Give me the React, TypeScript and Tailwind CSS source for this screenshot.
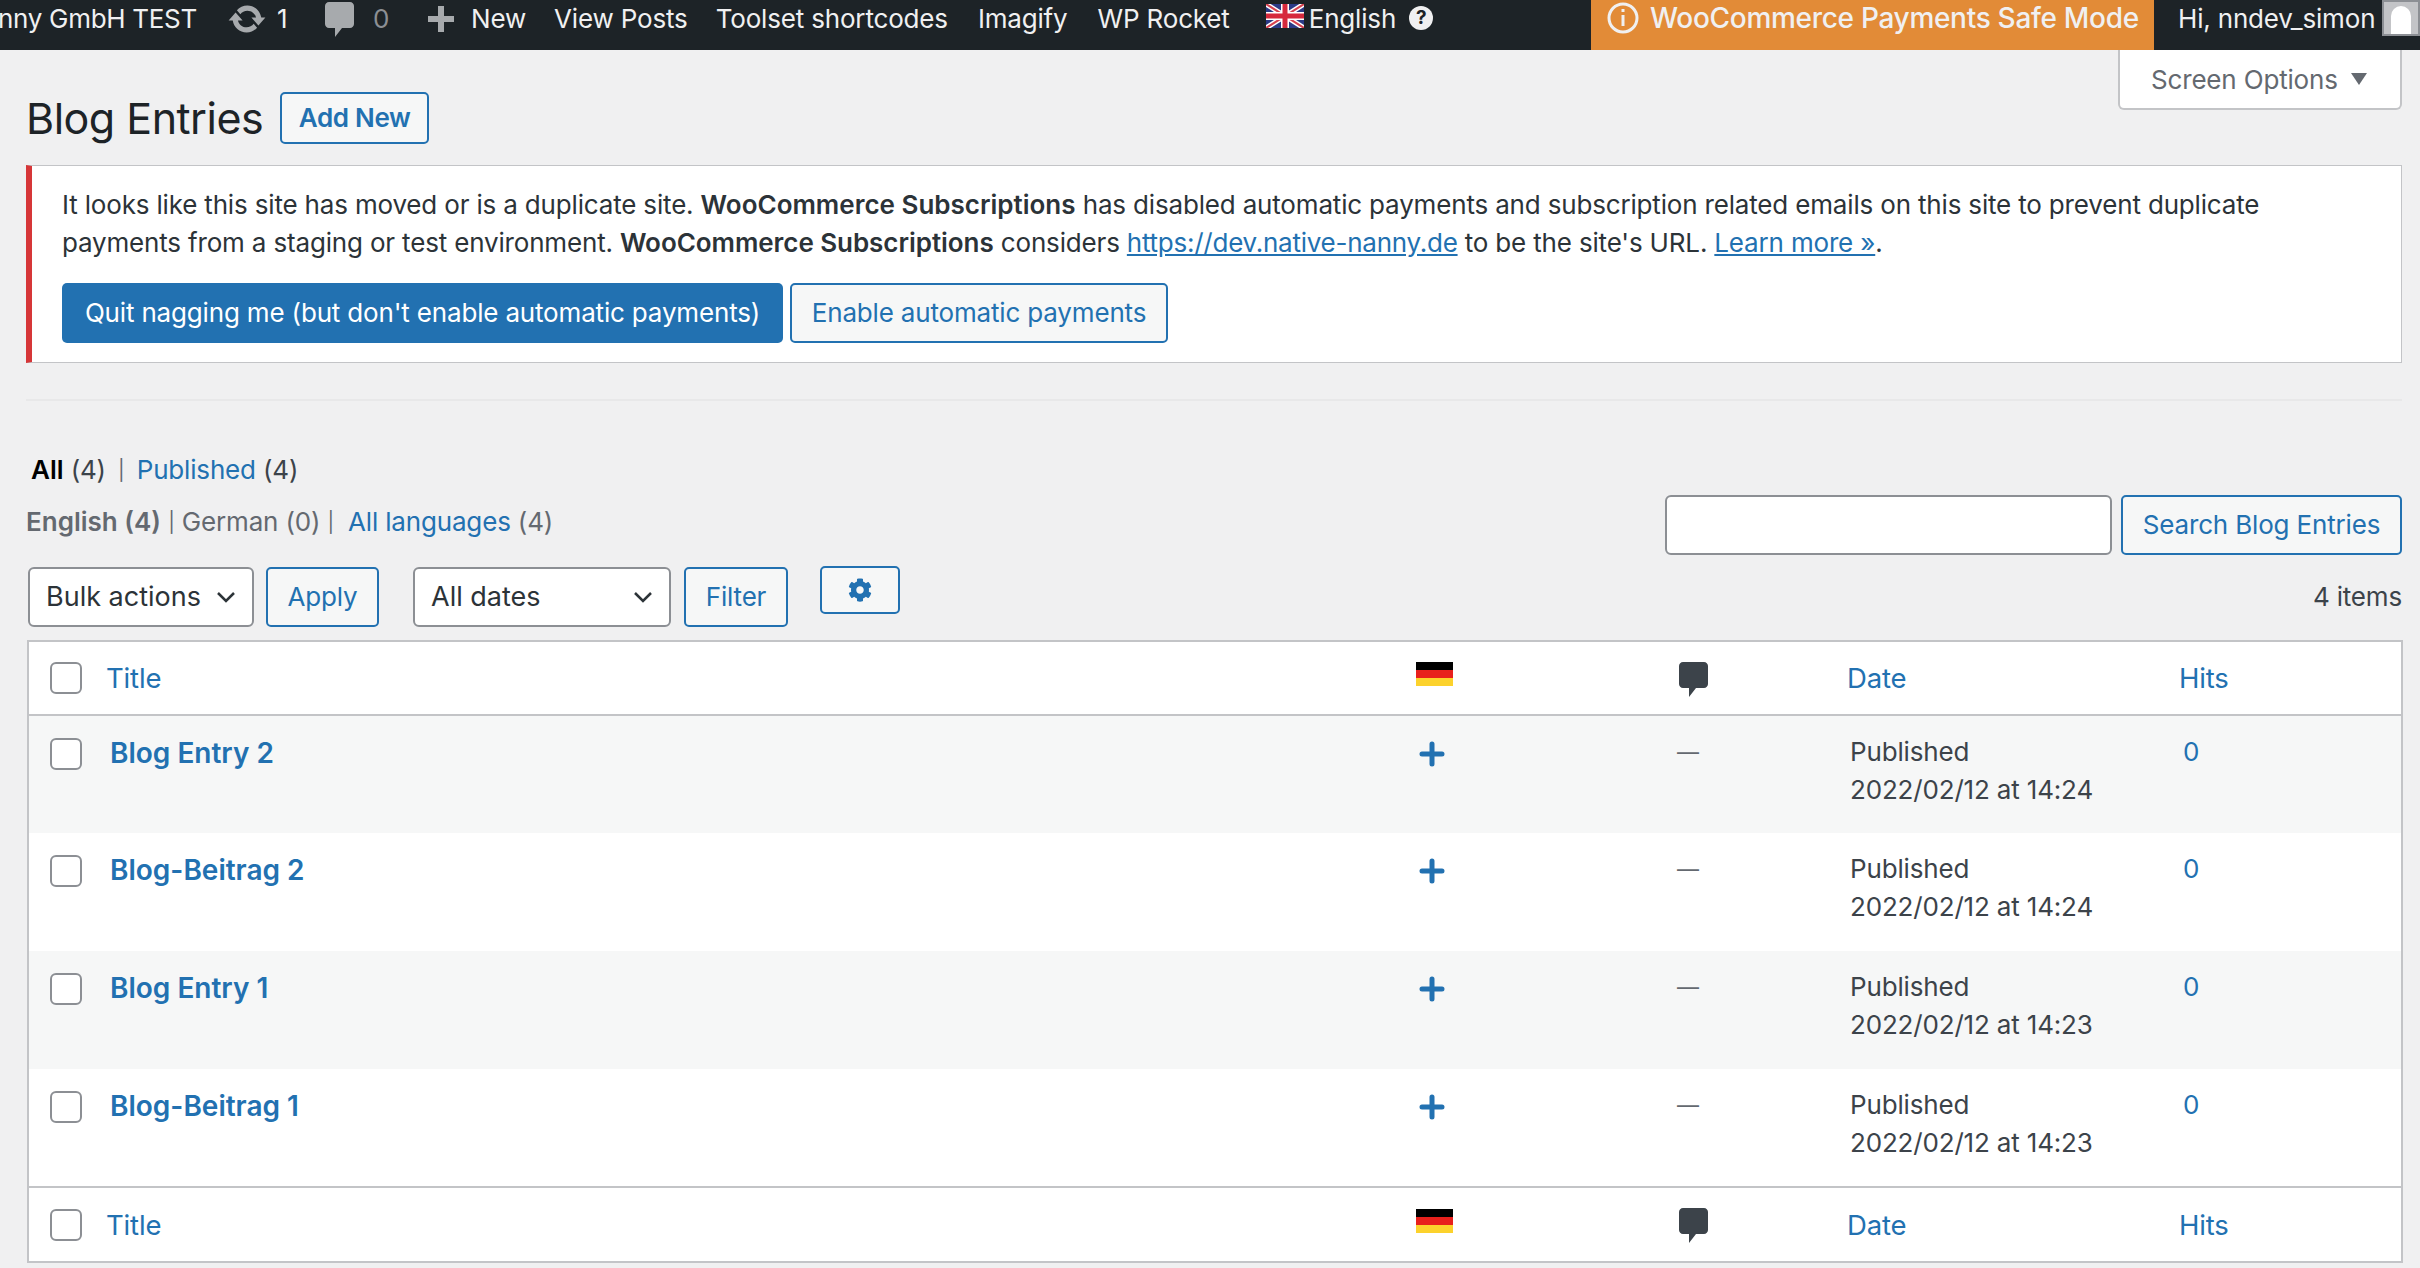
import { FaCog } from "react-icons/fa";

const font = { fontFamily: "Inter, 'Liberation Sans', sans-serif" };

const rows = [
    { title: "Blog Entry 2", time: "14:24", alt: true },
    { title: "Blog-Beitrag 2", time: "14:24", alt: false },
    { title: "Blog Entry 1", time: "14:23", alt: true },
    { title: "Blog-Beitrag 1", time: "14:23", alt: false },
];

const UpdateIcon = () => (
    <svg viewBox="0 0 20 20" className="w-[40px] h-[40px] fill-[#a7aaad]">
        <path d="M10.2 3.28c3.53 0 6.43 2.61 6.92 6h2.08l-3.5 4-3.5-4h2.32c-.45-1.97-2.21-3.45-4.32-3.45-1.45 0-2.73.71-3.54 1.78L4.95 5.66C6.23 4.2 8.11 3.28 10.2 3.28zm-.4 13.44c-3.52 0-6.43-2.61-6.92-6H.8l3.5-4c1.17 1.33 2.33 2.67 3.5 4H5.48c.45 1.97 2.21 3.45 4.32 3.45 1.45 0 2.73-.71 3.54-1.78l1.71 1.95c-1.28 1.46-3.15 2.38-5.25 2.38z" />
    </svg>
);

const CommentIcon = ({ className }: { className: string }) => (
    <svg viewBox="0 0 29 35" className={className}>
        <path d="M4 0h21c2.2 0 4 1.8 4 4v18c0 2.2-1.8 4-4 4H17l-7 9v-9H4c-2.2 0-4-1.800-4-4V4c0-2.200 1.800-4 4-4z" />
    </svg>
);

const GermanFlag = () => (
    <svg viewBox="0 0 37 24" className="w-[37px] h-[24px] block">
        <rect width="37" height="8" fill="#000000" />
        <rect y="8" width="37" height="8" fill="#e8201c" />
        <rect y="16" width="37" height="8" fill="#fcd22c" />
    </svg>
);

const UkFlag = () => (
    <svg viewBox="0 0 38 24" className="w-[38px] h-[24px]">
        <rect width="38" height="24" fill="#2b3a86" />
        <path d="M0 0L38 24M38 0L0 24" stroke="#ffffff" strokeWidth="5" />
        <path d="M0 0L38 24M38 0L0 24" stroke="#d6414f" strokeWidth="2" />
        <path d="M19 0V24M0 12H38" stroke="#ffffff" strokeWidth="8" />
        <path d="M19 0V24M0 12H38" stroke="#d6293c" strokeWidth="5" />
    </svg>
);

const Chevron = () => (
    <svg viewBox="0 0 20 12" className="w-[20px] h-[12px] fill-none stroke-[#2c3338] stroke-[2.5]">
        <path d="M2 2l8 8 8-8" />
    </svg>
);

const Checkbox = () => (
    <span className="block w-[32px] h-[32px] rounded-[6px] border-2 border-[#8c8f94] bg-white"></span>
);

const OutlineButton = ({ label, className }: { label: string; className: string }) => (
    <button className={"border-2 border-[#2271b1] rounded-[5px] bg-[#f6f7f7] text-[#2271b1] text-[26px] leading-none flex items-center justify-center " + className}>
        {label}
    </button>
);

const HeadRow = ({ top }: { top: boolean }) => (
    <tr className={top ? "h-[74px] border-b-2 border-[#c3c4c7] text-[27.5px]" : "h-[75px] border-t-2 border-[#c3c4c7] text-[27.5px]"}>
        <td className="pl-[21px]"><Checkbox /></td>
        <td className="pl-[12px] text-[#2271b1]">Title</td>
        <td className="pl-[15px] align-middle"><div className="-mt-[8px]"><GermanFlag /></div></td>
        <td className="pl-[18px]"><div className="mt-[2px]"><CommentIcon className="w-[29px] h-[35px] fill-[#3c434a]" /></div></td>
        <td className="pl-[11px] text-[#2271b1]">Date</td>
        <td className="pl-[13px] text-[#2271b1]">Hits</td>
    </tr>
);

const App = () => {
    return (
        <div className="w-[2420px] h-[1268px] overflow-hidden bg-[#f0f0f1] text-[26px] leading-[38px] tracking-[-0.17px] text-[#3c434a]" style={font}>
            <header className="h-[50px] bg-[#1d2327] flex items-start text-[#f0f0f1] text-[26px] leading-[38px] whitespace-nowrap">
                <span className="-ml-[2px] w-[229px] shrink-0 tracking-[-0.3px]">nny GmbH TEST</span>
                <span className="-mt-[1px]"><UpdateIcon /></span>
                <span className="ml-[10px] w-[48px]">1</span>
                <CommentIcon className="w-[29px] h-[35px] mt-[2px] fill-[#a7aaad]" />
                <span className="ml-[19px] w-[55px] text-[#8c8f94]">0</span>
                <svg viewBox="0 0 26 26" className="w-[26px] h-[26px] mt-[6px] fill-[#a7aaad]"><path d="M10 0h6v10h10v6H16v10h-6V16H0v-6h10z" /></svg>
                <span className="ml-[17px]">New</span>
                <span className="ml-[28px]">View Posts</span>
                <span className="ml-[28px]">Toolset shortcodes</span>
                <span className="ml-[30px]">Imagify</span>
                <span className="ml-[30px]">WP Rocket</span>
                <span className="ml-[36px] mt-[4px]"><UkFlag /></span>
                <span className="ml-[5px]">English</span>
                <span className="ml-[13px] mt-[6px] w-[24px] h-[24px] rounded-full bg-[#f0f0f1] text-[#1d2327] text-[19px] leading-[24px] font-bold text-center">?</span>
                <div className="ml-auto w-[563px] h-[50px] bg-[#e28b37] flex items-start pl-[16px] text-[28px] leading-[36px] font-medium tracking-[-0.3px]">
                    <svg viewBox="0 0 32 34" className="w-[32px] h-[34px] shrink-0 mt-[1px] fill-none stroke-[#f0f0f1] stroke-[3]">
                        <circle cx="16" cy="17" r="14" />
                        <path d="M16 14v11M16 8v3" />
                    </svg>
                    <span className="ml-[11px]">WooCommerce Payments Safe Mode</span>
                </div>
                <span className="ml-[24px] w-[204px] shrink-0">Hi, nndev_simon</span>
                <div className="w-[38px] h-[36px] bg-[#8c8f94] p-[2px] shrink-0">
                    <div className="h-full bg-[#c3c4c7] flex justify-center items-end overflow-hidden">
                        <div className="w-[20px] h-[28px] bg-white rounded-t-full"></div>
                    </div>
                </div>
            </header>

            <div className="relative pl-[26px] pr-[18px]">
                <div className="absolute right-[18px] top-0 w-[284px] h-[60px] bg-white border-2 border-t-0 border-[#c3c4c7] rounded-b-[6px] text-[#646970] flex items-center pl-[31px] pt-[2px]">
                    Screen Options
                    <span className="ml-[13px] w-0 h-0 border-x-[8px] border-x-transparent border-t-[12px] border-t-[#646970] -mt-[3px]"></span>
                </div>

                <div className="flex items-center h-[115px] pt-[20px]">
                    <h1 className="text-[43px] leading-none text-[#1d2327] tracking-[-0.5px] mt-[2px] -mr-[1px]">Blog Entries</h1>
                    <OutlineButton label="Add New" className="ml-[18px] w-[149px] h-[52px] font-semibold tracking-[-0.3px]" />
                </div>

                <div className="h-[198px] bg-white border border-[#c3c4c7] border-l-[6px] border-l-[#d63638] pl-[30px] pr-[20px] pt-[20px]">
                    <p className="text-[#2c3338]">
                        It looks like this site has moved or is a duplicate site. <b className="font-semibold tracking-normal">WooCommerce Subscriptions</b> has disabled automatic payments and subscription related emails on this site to prevent duplicate payments from a staging or test environment. <b className="font-semibold tracking-[-0.05px]">WooCommerce Subscriptions</b> considers <a className="text-[#2271b1] underline tracking-[-0.25px]">https://dev.native-nanny.de</a> to be the site's URL. <a className="text-[#2271b1] underline">Learn more »</a>.
                    </p>
                    <div className="flex gap-[7px] mt-[21px]">
                        <button className="w-[721px] h-[60px] rounded-[5px] bg-[#2271b1] text-white text-[26px]">Quit nagging me (but don't enable automatic payments)</button>
                        <OutlineButton label="Enable automatic payments" className="w-[378px] h-[60px]" />
                    </div>
                </div>

                <hr className="mt-[36px] border-t-2 border-[#e8e8e9]" />

                <div className="mt-[50px] ml-[5px] h-[38px] whitespace-nowrap">
                    <b className="text-black font-semibold tracking-normal">All</b> (4) <span className="mx-[5px] text-[#646970] text-[20px] align-[2px]">|</span> <a className="text-[#2271b1]">Published</a> (4)
                </div>

                <div className="flex items-start justify-between">
                    <div className="mt-[14px] text-[#646970] whitespace-nowrap">
                        <b className="font-semibold tracking-normal">English (4)</b> <span className="text-[20px] align-[2px]">|</span> German (0) <span className="text-[20px] align-[2px]">|</span> <a className="ml-[7px] text-[#2271b1]">All languages</a> (4)
                    </div>
                    <div className="flex gap-[9px] mt-[6px]">
                        <div className="w-[447px] h-[60px] bg-white border-2 border-[#8c8f94] rounded-[6px]"></div>
                        <OutlineButton label="Search Blog Entries" className="w-[281px] h-[60px]" />
                    </div>
                </div>

                <div className="flex items-start h-[73px] pl-[2px] mt-[12px]">
                    <div className="w-[226px] h-[60px] bg-white border-2 border-[#8c8f94] rounded-[6px] text-[#2c3338] text-[27px] tracking-normal flex items-center justify-between pl-[16px] pr-[16px]">Bulk actions <Chevron /></div>
                    <OutlineButton label="Apply" className="ml-[12px] w-[113px] h-[60px]" />
                    <div className="ml-[34px] w-[258px] h-[60px] bg-white border-2 border-[#8c8f94] rounded-[6px] text-[#2c3338] text-[27px] tracking-normal flex items-center justify-between pl-[16px] pr-[16px]">All dates <Chevron /></div>
                    <OutlineButton label="Filter" className="ml-[13px] w-[104px] h-[60px]" />
                    <button className="ml-[32px] -mt-[1px] w-[80px] h-[48px] border-2 border-[#2271b1] rounded-[5px] bg-[#f6f7f7] text-[#2271b1] flex items-center justify-center">
                        <FaCog className="w-[24px] h-[24px]" />
                    </button>
                    <span className="ml-auto mt-[11px] text-[#3c434a]">4 items</span>
                </div>

                <table className="table-fixed w-[2376px] ml-[1px] bg-white border-2 border-[#c3c4c7] border-collapse">
                    <colgroup>
                        <col className="w-[66px]" />
                        <col className="w-[1307px]" />
                        <col className="w-[260px]" />
                        <col className="w-[175px]" />
                        <col className="w-[330px]" />
                        <col />
                    </colgroup>
                    <thead>
                        <HeadRow top={true} />
                    </thead>
                    <tbody>
                        {rows.map(e => (
                            <tr key={e.title} className={e.alt ? "h-[118px] bg-[#f6f7f7] align-top" : "h-[118px] bg-white align-top"}>
                                <td className="pl-[21px] pt-[22px]"><Checkbox /></td>
                                <td className="pl-[16px] pt-[18px] text-[#2271b1] text-[28px] font-semibold tracking-normal">{e.title}</td>
                                <td className="pl-[18px] pt-[25px]">
                                    <svg viewBox="0 0 26 26" className="w-[26px] h-[26px] stroke-[#2271b1] stroke-[5]" strokeLinecap="round"><path d="M13 3v20M3 13h20" /></svg>
                                </td>
                                <td className="pl-[16px] pt-[17px] text-[#646970] text-[22px]">—</td>
                                <td className="pl-[14px] pt-[17px]">Published<br />2022/02/12 at {e.time}</td>
                                <td className="pl-[17px] pt-[17px] text-[#2271b1]">0</td>
                            </tr>
                        ))}
                    </tbody>
                    <tfoot>
                        <HeadRow top={false} />
                    </tfoot>
                </table>
            </div>
        </div>
    );
};

export default App;
